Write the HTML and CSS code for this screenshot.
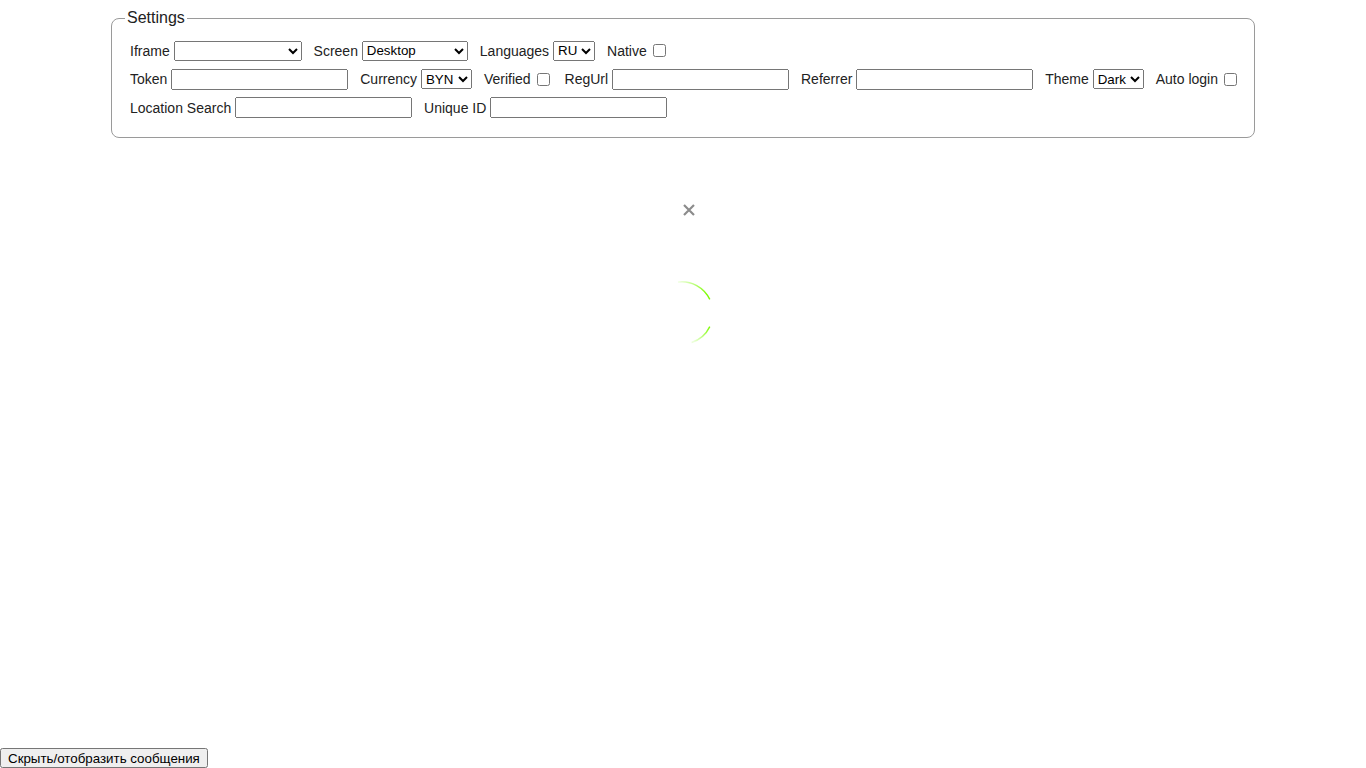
FILE: index.html
```html
<!DOCTYPE html>
<html lang="en">
<head>
  <meta charset="UTF-8" />
  <meta name="viewport" content="width=device-width, initial-scale=1.0"/>
  <title>Widget playground</title>
  <link rel="stylesheet" href="styles.css">
</head>
<body>
  <fieldset class="settings">
    <legend>Settings</legend>
    <div class="row">
      <label class="field">Iframe <select class="sel-iframe"><option></option></select></label>
      <label class="field">Screen <select class="sel-screen"><option>Desktop</option><option>Mobile</option></select></label>
      <label class="field">Languages <select class="sel-lang"><option>RU</option><option>EN</option></select></label>
      <label class="field">Native <input type="checkbox"></label>
    </div>
    <div class="row">
      <label class="field">Token <input type="text" class="txt"></label>
      <label class="field">Currency <select class="sel-short"><option>BYN</option><option>USD</option></select></label>
      <label class="field">Verified <input type="checkbox"></label>
      <label class="field">RegUrl <input type="text" class="txt"></label>
      <label class="field">Referrer <input type="text" class="txt"></label>
      <label class="field">Theme <select class="sel-short"><option>Dark</option><option>Light</option></select></label>
      <label class="field">Auto login <input type="checkbox"></label>
    </div>
    <div class="row">
      <label class="field">Location Search <input type="text" class="txt"></label>
      <label class="field">Unique ID <input type="text" class="txt"></label>
    </div>
  </fieldset>

  <div class="preview">
    <div class="close-row">
      <button class="close" title="Close">
        <svg width="12" height="12" viewBox="0 0 12 12"><path d="M1 1L11 11M11 1L1 11" stroke="#8c8c8c" stroke-width="2.2" fill="none"/></svg>
      </button>
    </div>
    <div class="loader-row">
      <svg class="loader" width="66" height="66" viewBox="0 0 66 66">
        <defs>
          <linearGradient id="fadeTop" x1="0" y1="0" x2="1" y2="0.5">
            <stop offset="0" stop-color="#7cfc00" stop-opacity="0.1"/>
            <stop offset="1" stop-color="#7cfc00" stop-opacity="1"/>
          </linearGradient>
          <linearGradient id="fadeBottom" x1="1" y1="0" x2="0.2" y2="1">
            <stop offset="0" stop-color="#7cfc00" stop-opacity="1"/>
            <stop offset="1" stop-color="#7cfc00" stop-opacity="0.15"/>
          </linearGradient>
        </defs>
        <path d="M29 2 A31 31 0 0 1 60.8 19.4" stroke="url(#fadeTop)" stroke-width="1.4" fill="none"/>
        <path d="M60.8 46.6 A31 31 0 0 1 42.6 62.5" stroke="url(#fadeBottom)" stroke-width="1.4" fill="none"/>
      </svg>
    </div>
  </div>

  <button class="toggle-messages">Скрыть/отобразить сообщения</button>
</body>
</html>
```

FILE: styles.css
```css
body {
  font-family: "Liberation Sans", Arial, sans-serif;
  font-size: 14px;
  color: #222;
  background-color: #fff;
  margin: 8px;
}
.settings {
  width: 1144px;
  box-sizing: border-box;
  margin: 1px auto 0;
  padding: 13px 13px 19px;
  border: 1px solid #9a9a9a;
  border-radius: 8px;
}
.settings legend {
  font-size: 16px;
  padding: 0 2px;
}
.row {
  display: flex;
  align-items: center;
  column-gap: 12px;
  height: 21px;
  padding-left: 5px;
  margin-bottom: 7.5px;
}
.row:last-child {
  margin-bottom: 0;
}
.field {
  display: flex;
  align-items: center;
  white-space: pre;
}
.field select,
.field input[type="text"] {
  font-family: "Liberation Sans", Arial, sans-serif;
  font-size: 13.33px;
  box-sizing: border-box;
}
.field input[type="text"] {
  width: 177px;
  height: 21px;
}
.field select {
  height: 20px;
}
.field input[type="checkbox"] {
  width: 13px;
  height: 13px;
  margin: 0 3px 0 2px;
}
.sel-iframe {
  width: 128px;
}
.sel-screen {
  width: 106px;
}
.sel-lang {
  width: 42px;
}
.sel-short {
  width: 51px;
}
.preview {
  display: flex;
  flex-direction: column;
  align-items: center;
}
.close-row {
  padding-left: 11px;
  margin-top: 66px;
}
.close {
  display: block;
  background: none;
  border: none;
  padding: 0;
  width: 12px;
  height: 12px;
  cursor: pointer;
}
.loader-row {
  margin-top: 64px;
  padding-right: 2px;
}
.loader {
  display: block;
}
.toggle-messages {
  position: fixed;
  left: 0;
  bottom: 0;
  font-family: "Liberation Sans", Arial, sans-serif;
  font-size: 13.33px;
  height: 20px;
  padding: 0 6px;
}
```
